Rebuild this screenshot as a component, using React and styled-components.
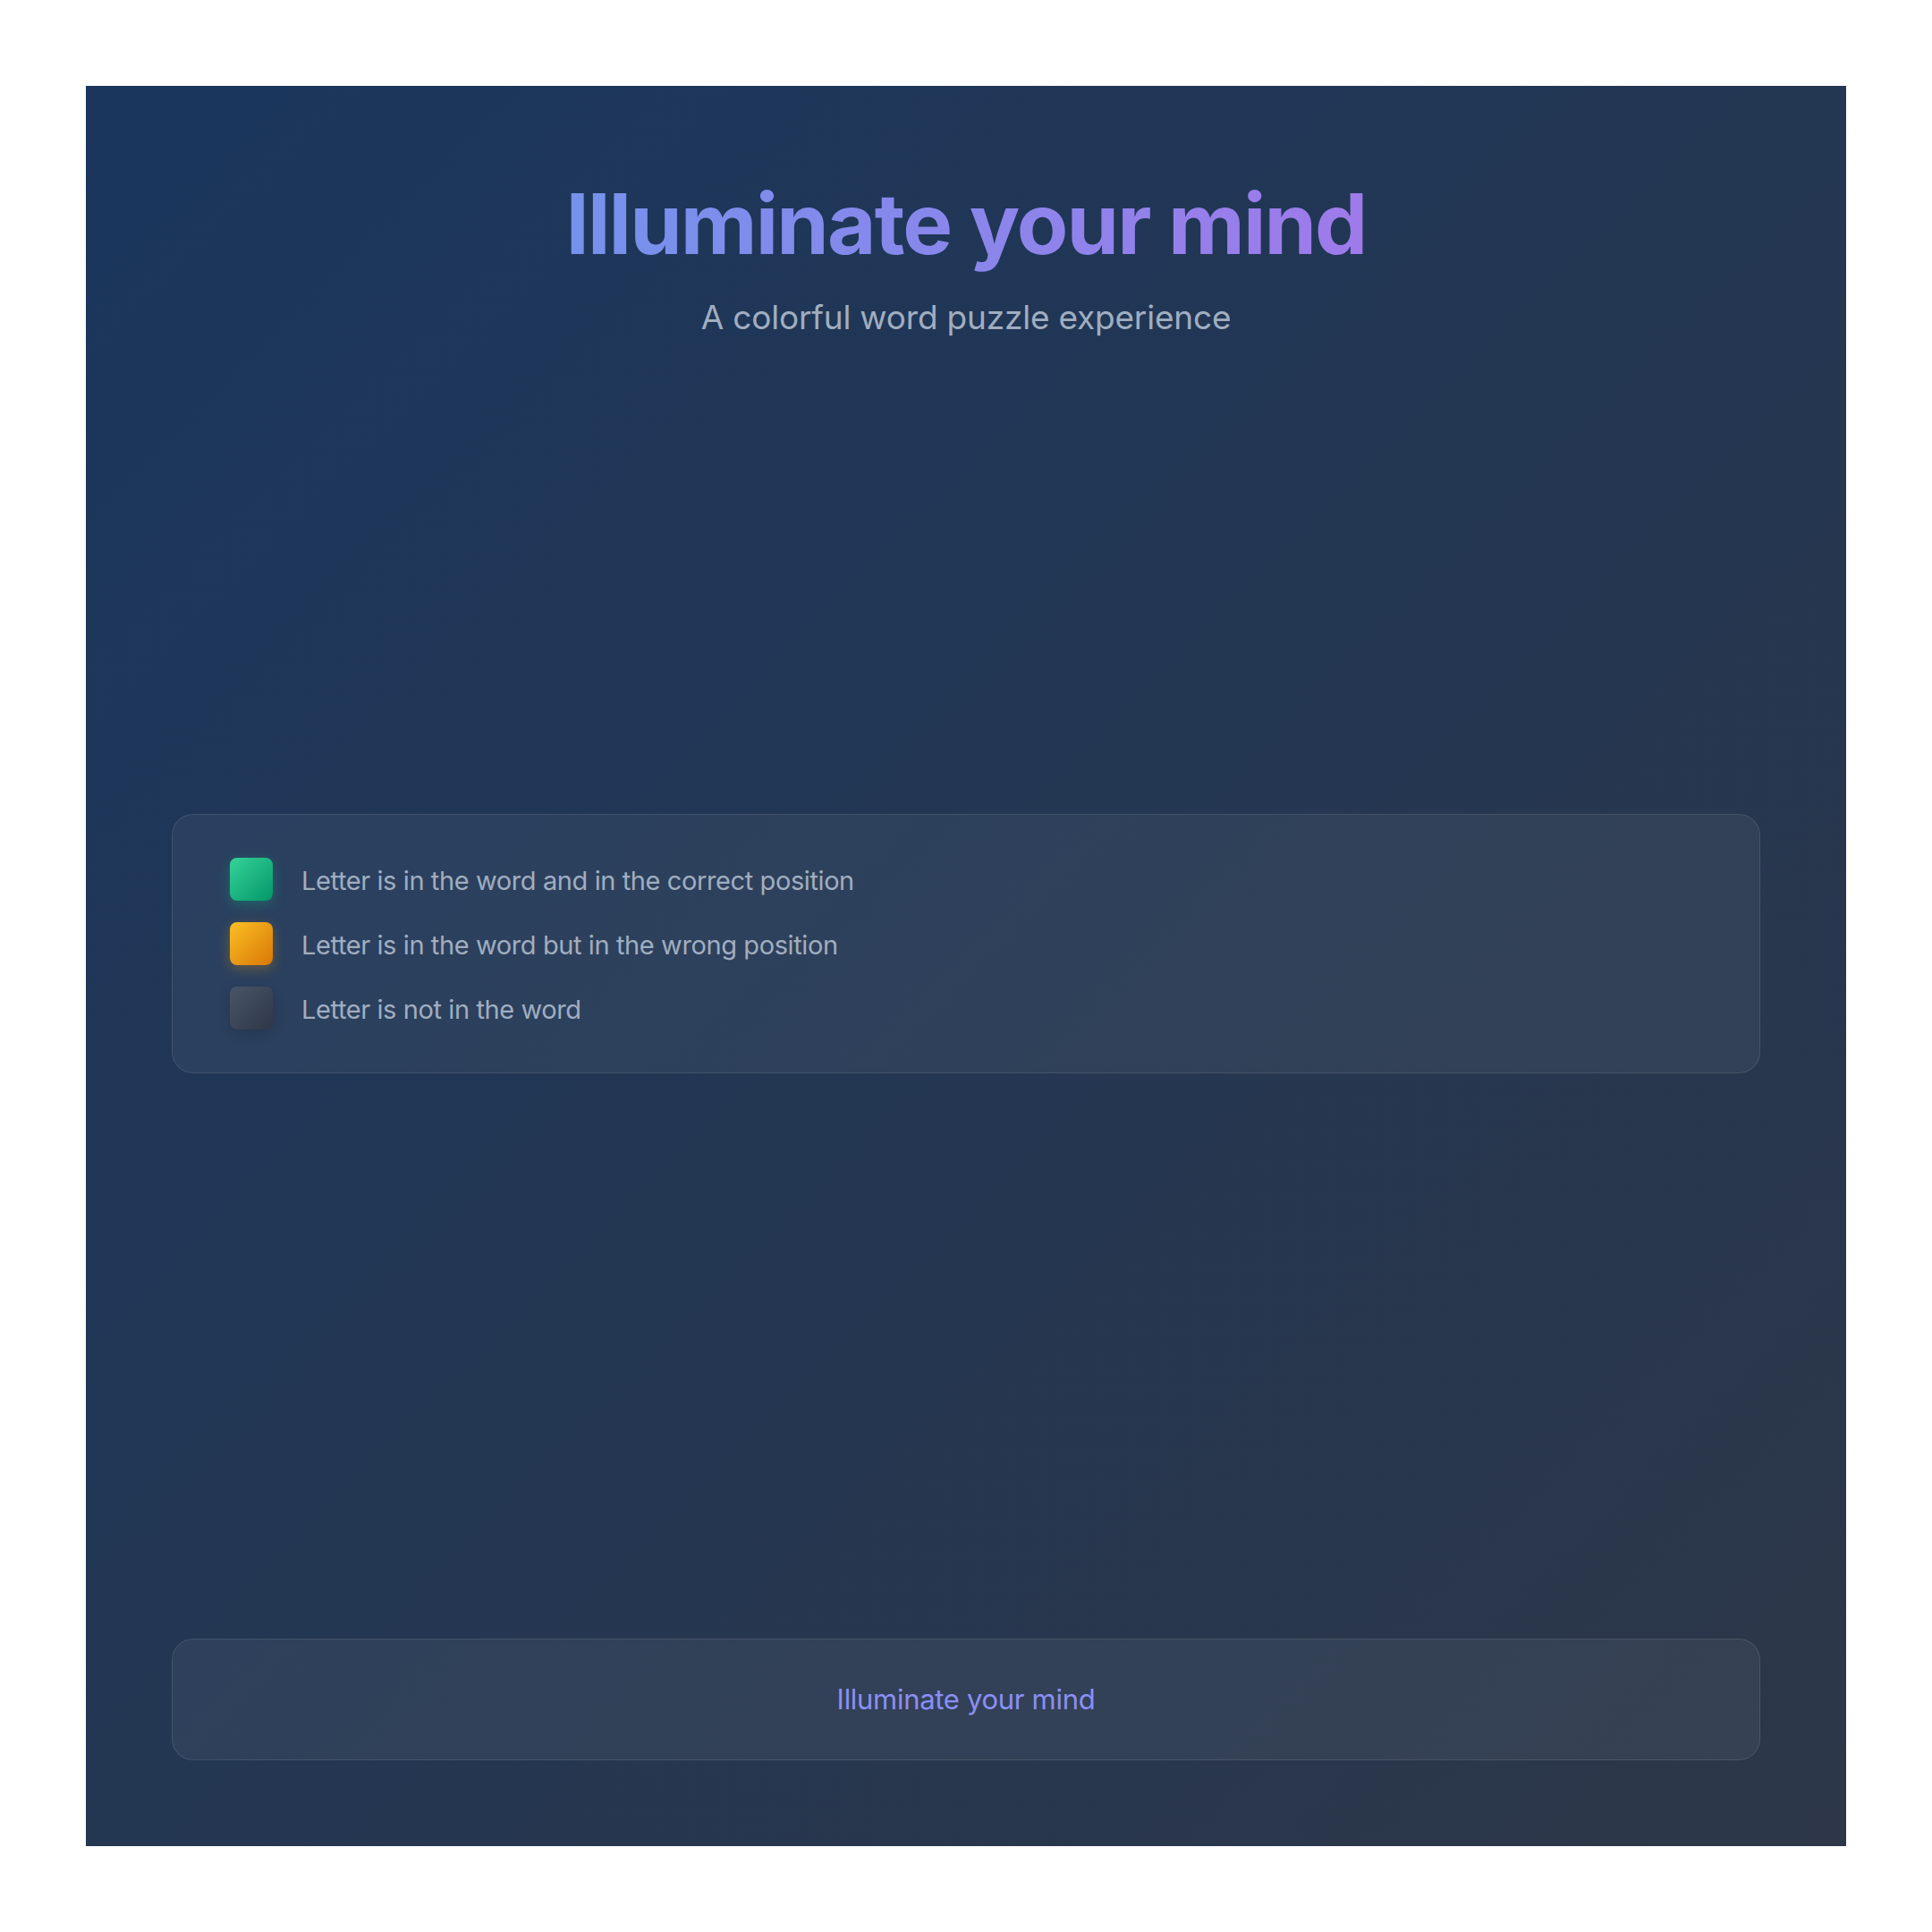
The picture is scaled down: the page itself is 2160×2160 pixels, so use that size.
import React from 'react';
import styled, { createGlobalStyle } from 'styled-components';

const legendItems = [
  { tone: 'correct', label: 'Letter is in the word and in the correct position' },
  { tone: 'present', label: 'Letter is in the word but in the wrong position' },
  { tone: 'absent', label: 'Letter is not in the word' },
];

const tones = {
  correct: {
    bg: 'linear-gradient(135deg, #34d399 0%, #059669 100%)',
    glow: '0 4px 14px rgba(16, 185, 129, 0.3)',
  },
  present: {
    bg: 'linear-gradient(135deg, #fbbf24 0%, #d97706 100%)',
    glow: '0 4px 14px rgba(245, 158, 11, 0.3)',
  },
  absent: {
    bg: 'linear-gradient(135deg, #4a5568 0%, #2d3748 100%)',
    glow: '0 4px 14px rgba(0, 0, 0, 0.15)',
  },
};

const App = () => {
  return (
    <>
      <GlobalStyle />
      <Page>
        <Panel>
          <Header>
            <Title>Illuminate your mind</Title>
            <Subtitle>A colorful word puzzle experience</Subtitle>
          </Header>

          <Legend>
            {legendItems.map((item) => (
              <LegendRow key={item.tone}>
                <Swatch $tone={item.tone} />
                <LegendText>{item.label}</LegendText>
              </LegendRow>
            ))}
          </Legend>

          <Footer>
            <FooterText>Illuminate your mind</FooterText>
          </Footer>
        </Panel>
      </Page>
    </>
  );
};

const GlobalStyle = createGlobalStyle`
  * {
    box-sizing: border-box;
  }

  body {
    margin: 0;
    background: #ffffff;
    font-family: Inter, "Noto Sans", "DejaVu Sans", sans-serif;
  }
`;

const Page = styled.div`
  padding: 96px;
  width: 2160px;
`;

const Panel = styled.main`
  display: flex;
  flex-direction: column;
  height: 1968px;
  padding: 96px;
  background: linear-gradient(135deg, #1a365d 0%, #2d3748 100%);
`;

const Header = styled.header`
  display: flex;
  flex-direction: column;
  align-items: center;
  text-align: center;
`;

const Title = styled.h1`
  margin: 0;
  padding-top: 2px;
  font-size: 94px;
  line-height: 1.2;
  font-weight: 700;
  letter-spacing: -0.02em;
  background: linear-gradient(90deg, #7592ec 0%, #9f7aea 100%);
  -webkit-background-clip: text;
  background-clip: text;
  color: transparent;
`;

const Subtitle = styled.p`
  margin: 21px 0 0;
  font-size: 37px;
  line-height: 54px;
  letter-spacing: -0.2px;
  color: #a0aec0;
`;

const Legend = styled.section`
  display: flex;
  flex-direction: column;
  gap: 24px;
  margin-top: 528px;
  padding: 48px 64px;
  background: rgba(255, 255, 255, 0.05);
  border: 1px solid rgba(255, 255, 255, 0.1);
  border-radius: 24px;
`;

const LegendRow = styled.div`
  display: flex;
  align-items: center;
  gap: 32px;
`;

const Swatch = styled.span`
  flex: none;
  width: 48px;
  height: 48px;
  border-radius: 8px;
  background: ${({ $tone }) => tones[$tone].bg};
  box-shadow: ${({ $tone }) => tones[$tone].glow};
`;

const LegendText = styled.span`
  padding-top: 4px;
  font-size: 29px;
  line-height: 1.4;
  letter-spacing: -0.4px;
  color: #a0aec0;
`;

const Footer = styled.footer`
  margin-top: auto;
  padding: 48px;
  text-align: center;
  background: rgba(255, 255, 255, 0.05);
  border: 1px solid rgba(255, 255, 255, 0.1);
  border-radius: 24px;
`;

const FooterText = styled.span`
  display: block;
  font-size: 31px;
  line-height: 38px;
  letter-spacing: -0.3px;
  color: #8b8ff6;
`;

export default App;
